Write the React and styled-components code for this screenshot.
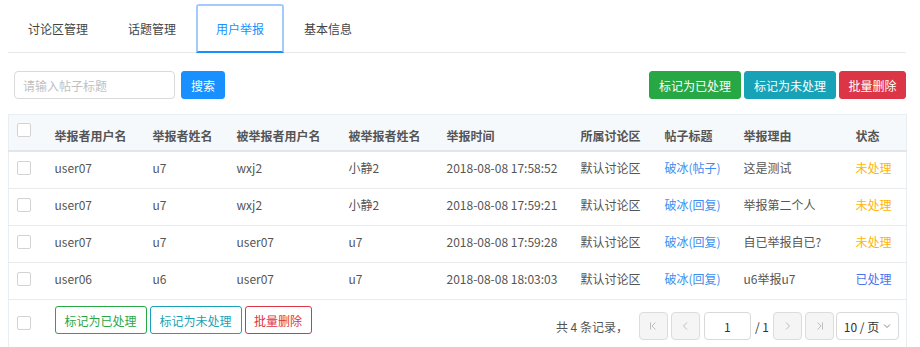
import React from "react";
import styled, { createGlobalStyle } from "styled-components";

const Global = createGlobalStyle`
  html, body { margin: 0; padding: 0; background: #fff; overflow: hidden; }
  body { font-family: "Noto Sans CJK SC", "Open Sans", sans-serif; font-size: 12px; color: #555; }
  * { box-sizing: border-box; }
`;

const Page = styled.div`
  width: 906px;
  padding-left: 8px;
`;

const TabNav = styled.div`
  display: flex;
  padding-top: 4px;
  border-bottom: 1px solid #e8e8e8;
`;

const Tab = styled.div`
  height: 49px;
  margin-bottom: -1px;
  padding: 0 18px;
  display: flex;
  align-items: center;
  font-size: 12px;
  color: ${(p) => (p.$active ? "#1890ff" : "#444")};
  border: 2px solid ${(p) => (p.$active ? "#a4c9fb" : "transparent")};
  border-bottom: 2px solid ${(p) => (p.$active ? "#1890ff" : "transparent")};
  border-radius: 3px 3px 0 0;
`;

const Toolbar = styled.div`
  display: flex;
  align-items: center;
  margin-top: 18px;
  padding-left: 6px;
  height: 28px;
`;

const SearchInput = styled.input`
  width: 161px;
  height: 28px;
  border: 1px solid #d9d9d9;
  border-radius: 4px;
  padding: 0 8px;
  font: inherit;
  font-size: 12px;
  outline: none;
  &::placeholder { color: #bfbfbf; }
`;

const Btn = styled.button`
  height: 28px;
  padding: 0 ${(p) => (p.$pad ?? 9)}px;
  border-radius: 3px;
  font: inherit;
  font-size: 12px;
  cursor: pointer;
  white-space: nowrap;
  border: 1px solid ${(p) => p.$color};
  background: ${(p) => (p.$outline ? "#fff" : p.$color)};
  color: ${(p) => (p.$outline ? p.$color : "#fff")};
`;

const Spacer = styled.div`flex: 1;`;

const BtnGroup = styled.div`
  display: flex;
  gap: ${(p) => p.$gap ?? 3}px;
  margin-left: ${(p) => p.$ml ?? 0}px;
`;

const Table = styled.table`
  margin-top: 15px;
  width: 898px;
  table-layout: fixed;
  border-collapse: collapse;
  border: 1px solid #e9eef3;
`;

const HeadRow = styled.tr`
  background: #f6f9fc;
  border-bottom: 2px solid #e2e5ea;
`;

const Th = styled.th`
  text-align: left;
  font-weight: bold;
  color: #555;
  font-size: 12px;
  line-height: 20px;
  padding: ${(p) => (p.$check ? "8px 0 13px 8px" : "11px 0 4px 0")};
  vertical-align: top;
`;

const Row = styled.tr`
  border-bottom: 1px solid #ebebeb;
`;

const Td = styled.td`
  font-size: 12px;
  line-height: 20px;
  color: ${(p) => p.$color || "#555"};
  padding: ${(p) => (p.$check ? "6px 0 10px 8px" : "6px 0 10px 0")};
  vertical-align: top;
  white-space: nowrap;
`;

const Check = styled.span`
  display: block;
  width: 14px;
  height: 14px;
  margin-top: ${(p) => p.$mt ?? 0}px;
  border: 1px solid #d3d3d3;
  border-radius: 2px;
  background: #fff;
`;

const FootCell = styled.td`
  padding: ${(p) => (p.$check ? "16px 0 0 8px" : "6px 7px 6px 0")};
  vertical-align: top;
  height: 48px;
`;

const FootBar = styled.div`
  display: flex;
  align-items: flex-start;
`;

const Pager = styled.div`
  display: flex;
  align-items: center;
  margin-top: 6px;
  height: 28px;
  font-size: 12px;
  color: #555;
`;

const Total = styled.span`
  margin-right: 11px;
`;

const PageBtn = styled.div`
  width: 29px;
  height: 28px;
  display: flex;
  align-items: center;
  justify-content: center;
  background: #f5f5f5;
  border: 1px solid #dcdcdc;
  border-radius: 4px;
  margin-right: ${(p) => p.$mr ?? 3}px;
`;

const PageInput = styled.div`
  width: 47px;
  height: 28px;
  margin-left: 1px;
  border: 1px solid #d9d9d9;
  border-radius: 4px;
  display: flex;
  align-items: center;
  justify-content: center;
  color: #333;
`;

const Of = styled.span`
  margin: 0 4px 0 4px;
  color: #333;
`;

const SizeSelect = styled.div`
  width: 63px;
  height: 28px;
  margin-left: 2px;
  border: 1px solid #d9d9d9;
  border-radius: 4px;
  display: flex;
  align-items: center;
  justify-content: center;
  gap: 4px;
  color: #333;
`;

const Icon = ({ d, w = 12 }) => (
  <svg width={w} height="12" viewBox={`0 0 ${w} 12`} fill="none" stroke="#bdbdbd" strokeWidth="1">
    <path d={d} />
  </svg>
);

const cols = [46, 98, 84, 112, 98, 134, 84, 79, 112, 51];
const heads = ["举报者用户名", "举报者姓名", "被举报者用户名", "被举报者姓名", "举报时间", "所属讨论区", "帖子标题", "举报理由", "状态"];

const rows = [
  ["user07", "u7", "wxj2", "小静2", "2018-08-08 17:58:52", "默认讨论区", "破冰(帖子)", "这是测试", "未处理"],
  ["user07", "u7", "wxj2", "小静2", "2018-08-08 17:59:21", "默认讨论区", "破冰(回复)", "举报第二个人", "未处理"],
  ["user07", "u7", "user07", "u7", "2018-08-08 17:59:28", "默认讨论区", "破冰(回复)", "自已举报自已?", "未处理"],
  ["user06", "u6", "user07", "u7", "2018-08-08 18:03:03", "默认讨论区", "破冰(回复)", "u6举报u7", "已处理"],
];

const GREEN = "#28a745";
const TEAL = "#17a2b8";
const RED = "#dc3545";

export default function App() {
  return (
    <Page>
      <Global />
      <TabNav>
        {["讨论区管理", "话题管理", "用户举报", "基本信息"].map((t) => (
          <Tab key={t} $active={t === "用户举报"}>{t}</Tab>
        ))}
      </TabNav>
      <Toolbar>
        <SearchInput placeholder="请输入帖子标题" />
        <BtnGroup $ml={6}>
          <Btn $color="#1890ff">搜索</Btn>
        </BtnGroup>
        <Spacer />
        <BtnGroup>
          <Btn $color={GREEN}>标记为已处理</Btn>
          <Btn $color={TEAL}>标记为未处理</Btn>
          <Btn $color={RED} $pad={8.5}>批量删除</Btn>
        </BtnGroup>
      </Toolbar>
      <Table>
        <colgroup>
          {cols.map((w, i) => (
            <col key={i} style={{ width: w }} />
          ))}
        </colgroup>
        <thead>
          <HeadRow>
            <Th $check>
              <Check />
            </Th>
            {heads.map((h) => (
              <Th key={h}>{h}</Th>
            ))}
          </HeadRow>
        </thead>
        <tbody>
          {rows.map((r, i) => (
            <Row key={i}>
              <Td $check>
                <Check $mt={3} />
              </Td>
              {r.map((c, j) => {
                let color;
                if (j === 6) color = "#3d8ef0";
                if (j === 8) color = c === "未处理" ? "#ffb400" : "#4a72f0";
                return (
                  <Td key={j} $color={color}>
                    {c}
                  </Td>
                );
              })}
            </Row>
          ))}
        </tbody>
        <tfoot>
          <tr>
            <FootCell $check>
              <Check />
            </FootCell>
            <FootCell colSpan={9}>
              <FootBar>
                <BtnGroup>
                  <Btn $outline $color={GREEN}>标记为已处理</Btn>
                  <Btn $outline $color={TEAL}>标记为未处理</Btn>
                  <Btn $outline $color={RED} $pad={8.5}>批量删除</Btn>
                </BtnGroup>
                <Spacer />
                <Pager>
                  <Total>共 4 条记录，</Total>
                  <PageBtn>
                    <Icon d="M3.5 2.5v7M8.5 2.5L5 6l3.5 3.5" />
                  </PageBtn>
                  <PageBtn>
                    <Icon d="M8 2.5L4.5 6 8 9.5" />
                  </PageBtn>
                  <PageInput>1</PageInput>
                  <Of>/ 1</Of>
                  <PageBtn>
                    <Icon d="M4 2.5L7.5 6 4 9.5" />
                  </PageBtn>
                  <PageBtn $mr={0}>
                    <Icon d="M3.5 2.5L7 6l-3.5 3.5M8.5 2.5v7" />
                  </PageBtn>
                  <SizeSelect>
                    10 / 页
                    <svg width="8" height="6" viewBox="0 0 8 6" fill="none" stroke="#888" strokeWidth="1">
                      <path d="M1 1.5l3 3 3-3" />
                    </svg>
                  </SizeSelect>
                </Pager>
              </FootBar>
            </FootCell>
          </tr>
        </tfoot>
      </Table>
    </Page>
  );
}
